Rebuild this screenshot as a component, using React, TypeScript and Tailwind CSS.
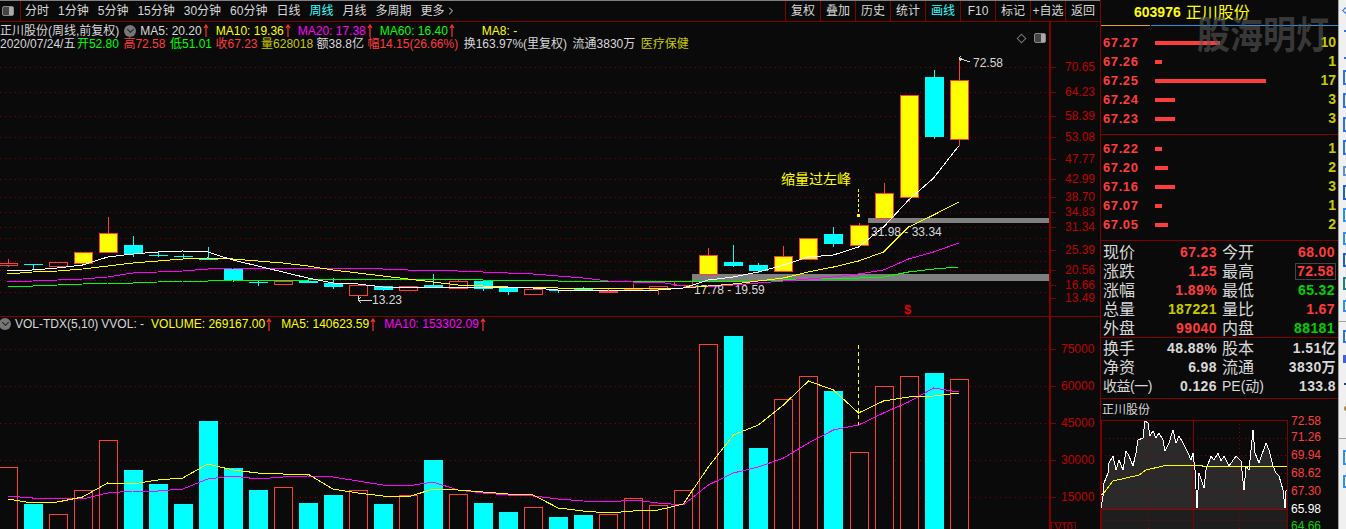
import { ChevronRight } from "lucide-react";

const CN = "font-['Liberation_Sans','Noto_Sans_CJK_SC',sans-serif]";

const TABS = ["分时", "1分钟", "5分钟", "15分钟", "30分钟", "60分钟", "日线", "周线", "月线", "多周期"];
const TOOLS = ["复权", "叠加", "历史", "统计", "画线", "F10", "标记", "+自选", "返回"];

// x of candle i, same spacing in both panels
const cx = (i: number) => 7.5 + 25.03 * i;

// [body top, body bottom, wick top, wick bottom, hollow / yellow / cyan]
type Candle = [number, number, number, number, "h" | "y" | "c"];

const CANDLES: Candle[] = [
  [263, 265, 259, 267, "h"], [264, 264, 264, 269, "c"], [262, 266, 262, 266, "h"], [252, 263, 252, 263, "y"],
  [233, 252, 217, 252, "y"], [245, 254, 236, 257, "c"], [255, 255, 252, 257, "c"], [256, 257, 254, 258, "c"],
  [258, 260, 247, 260, "c"], [269, 280, 269, 282, "c"], [282, 282, 280, 286, "c"], [281, 284, 281, 284, "h"],
  [281, 283, 279, 283, "c"], [283, 287, 278, 289, "c"], [285, 295, 285, 300, "h"], [286, 290, 286, 291, "c"],
  [286, 290, 286, 290, "h"], [285, 288, 274, 288, "c"], [281, 288, 280, 288, "h"], [281, 289, 281, 291, "c"],
  [288, 292, 288, 295, "c"], [289, 294, 289, 294, "h"], [290, 291, 290, 293, "c"], [288, 291, 287, 291, "c"],
  [291, 292, 288, 293, "h"], [289, 289, 284, 290, "h"], [286, 289, 286, 295, "h"], [281, 285, 281, 285, "h"],
  [255, 274, 248, 274, "y"], [262, 266, 245, 267, "c"], [265, 271, 263, 273, "c"], [256, 271, 246, 271, "y"],
  [238, 259, 238, 259, "y"], [234, 244, 227, 247, "c"], [225, 245, 223, 245, "y"], [193, 218, 183, 218, "y"],
  [95, 197, 95, 202, "y"], [77, 137, 70, 139, "c"], [80, 139, 57, 146, "y"],
];

const MA5 = [271, 270, 268, 265, 257, 254, 252, 251, 252, 260, 266, 272, 278, 283, 284, 287, 287, 288, 287, 287, 287, 288, 290, 290, 290, 291, 290, 288, 280, 277, 272, 265, 257, 255, 247, 227, 200, 178, 146];
const MA10 = [274, 272, 271, 269, 266, 263, 261, 259, 258, 259, 261, 263, 266, 270, 273, 276, 279, 282, 285, 286, 287, 287, 288, 288, 288, 288, 288, 288, 286, 284, 281, 278, 272, 267, 261, 252, 227, 215, 202];
const MA20 = [282, 281, 280, 279, 277, 273, 272, 271, 269, 268, 268, 268, 268, 268, 268, 269, 270, 270, 271, 272, 273, 274, 276, 278, 281, 282, 282, 286, 287, 285, 283, 281, 279, 277, 274, 270, 259, 252, 243];
const MA60 = [286, 286, 285, 284, 283, 283, 282, 281, 281, 280, 280, 280, 280, 279, 279, 279, 279, 279, 279, 280, 280, 280, 281, 281, 281, 281, 281, 281, 281, 281, 281, 280, 279, 278, 278, 277, 272, 269, 267];

const VOLS: [number, "h" | "c"][] = [
  [467, "h"], [504, "c"], [514, "h"], [490, "h"], [440, "h"], [470, "c"], [484, "c"], [504, "c"], [421, "c"], [468, "c"],
  [490, "c"], [487, "h"], [503, "c"], [495, "c"], [490, "h"], [504, "c"], [495, "h"], [460, "c"], [494, "h"], [503, "c"],
  [512, "c"], [507, "h"], [517, "c"], [515, "c"], [514, "h"], [498, "h"], [505, "h"], [490, "h"], [344, "h"], [336, "c"],
  [448, "c"], [399, "h"], [376, "h"], [391, "c"], [452, "h"], [386, "h"], [376, "h"], [373, "c"], [379, "h"],
];
const VMA5 = [499, 503, 502, 497, 483, 484, 480, 478, 464, 470, 473, 474, 474, 489, 493, 496, 497, 489, 490, 492, 494, 495, 508, 511, 513, 511, 510, 504, 467, 435, 425, 405, 381, 390, 413, 401, 397, 396, 393];
const VMA10 = [496, 498, 498, 499, 493, 491, 491, 489, 479, 476, 479, 477, 476, 477, 481, 485, 486, 482, 490, 493, 495, 496, 499, 501, 502, 500, 503, 505, 485, 473, 467, 458, 443, 430, 425, 413, 402, 388, 392];

const PRICE_GRID = [67, 92, 116, 137, 158, 179, 197, 212, 227, 238, 251, 261, 270, 280, 292];
const PRICE_AXIS: [string, number][] = [
  ["70.65", 67], ["64.23", 92], ["58.39", 116], ["53.08", 137], ["47.77", 159], ["42.99", 179], ["38.70", 197],
  ["34.83", 212], ["31.34", 227], ["25.39", 250], ["20.56", 270], ["16.66", 285], ["13.49", 298],
];
const VOL_AXIS: [string, number][] = [["75000", 349], ["60000", 386], ["45000", 423], ["30000", 460], ["15000", 497]];

const ASKS: [string, number, number][] = [["67.27", 65, 10], ["67.26", 7, 1], ["67.25", 111, 17], ["67.24", 20, 3], ["67.23", 20, 3]];
const BIDS: [string, number, number][] = [["67.22", 7, 1], ["67.20", 13, 2], ["67.16", 20, 3], ["67.07", 7, 1], ["67.05", 13, 2]];

const RED = "text-[#ff3c3c]";
const GREEN = "text-[#00d000]";
const GOLD = "text-[#c8c800]";

const STATS: [string, string, string, string, string, string][] = [
  ["现价", "67.23", RED, "今开", "68.00", RED],
  ["涨跌", "1.25", RED, "最高", "72.58", RED],
  ["涨幅", "1.89%", RED, "最低", "65.32", GREEN],
  ["总量", "187221", GOLD, "量比", "1.67", RED],
  ["外盘", "99040", RED, "内盘", "88181", GREEN],
];
const STATS2: [string, string, string, string][] = [
  ["换手", "48.88%", "股本", "1.51亿"],
  ["净资", "6.98", "流通", "3830万"],
  ["收益(一)", "0.126", "PE(动)", "133.8"],
];

const TICK_LINE = "0,88 2,76 3,63 7,53 8,43 12,36 15,50 18,40 22,50 25,31 28,36 32,46 35,33 37,20 42,18 44,1 47,3 49,16 52,11 55,18 58,13 62,20 64,31 68,23 72,10 75,23 78,16 82,23 87,33 90,40 92,33 94,50 96,88 98,53 103,68 105,50 110,36 113,40 117,33 120,41 123,36 128,46 135,36 140,41 143,70 145,46 148,50 152,10 154,33 158,43 165,23 168,30 172,46 175,53 178,56 182,70 184,88 185,71 186,70";
const AVG_LINE = "0,75 3,73 12,61 25,58 38,55 45,50 62,46 78,45 95,45 108,47 128,46 155,46 175,46 186,47";

// right edge of the window: the tool strip, cut off by the screenshot
const STRIP: [number, number, string][] = [
  [70, 15, "border-[#3070e0]"], [93, 15, "border-[#3070e0]"], [117, 15, "border-[#3070e0]"], [140, 15, "border-[#3070e0]"],
  [166, 10, "border-[#6090d0]"], [185, 15, "border-[#2060c0]"], [208, 14, "border-[#3090f0]"], [232, 13, "border-[#3090f0]"],
  [253, 14, "border-[#2060c0]"], [277, 13, "border-[#208080]"], [300, 12, "border-[#3090f0]"], [330, 13, "border-[#3070e0]"],
  [450, 15, "border-[#3090f0]"], [475, 13, "border-[#3090f0]"],
];

const pts = (ys: number[]) => ys.map((y, i) => `${cx(i)},${y}`).join(" ");

function UpMark() {
  return (
    <svg width={8} height={13} viewBox="0 0 8 13" className="block shrink-0">
      <path d="M4 1 L4 13 M2 4 L4 1 L6 4" fill="none" stroke="#ff3030" strokeWidth={1.2} />
    </svg>
  );
}

function Collapse() {
  return (
    <span className="flex h-[12px] w-[12px] shrink-0 items-center justify-center rounded-full bg-[#777]">
      <span className="mt-[-3px] h-[5px] w-[5px] rotate-45 border-r border-b border-[#222]" />
    </span>
  );
}

function PanelIcon() {
  return (
    <span className="flex h-[10px] w-[12px] justify-end rounded-[2px] border border-[#888] bg-[#444]">
      <span className="w-[4px] bg-[#aaa]" />
    </span>
  );
}

function Toolbar() {
  return (
    <div className="flex h-[21px] items-center justify-between border-b border-[#800000] text-[12px] leading-none text-[#d8d8d8]">
      <div className="flex h-full items-center">
        <span className="ml-[2px]">
          <PanelIcon />
        </span>
        <span className="ml-[6px] h-full border-l border-[#800000]" />
        <div className="ml-[4px] flex items-center gap-[9px]">
          {TABS.map((t) => (
            <span key={t} className={t === "周线" ? "text-[#38ffff]" : ""}>{t}</span>
          ))}
          <span className="flex items-center">
            更多
            <ChevronRight size={12} />
          </span>
        </div>
      </div>
      <div className="flex h-full">
        {TOOLS.map((t) => (
          <span
            key={t}
            className={`flex w-[35px] items-center justify-center whitespace-nowrap border-l border-[#800000] ${t === "画线" ? "text-[#38ffff]" : ""}`}
          >
            {t}
          </span>
        ))}
      </div>
    </div>
  );
}

function InfoHeader() {
  return (
    <div className="relative h-[28px] pt-[2px] text-[12px] leading-[14px]">
      <div className="flex h-[13px] items-center whitespace-nowrap">
        <span className="text-[#d8d8d8]">正川股份(周线,前复权)</span>
        <span className="ml-[5px]"><Collapse /></span>
        <span className="ml-[4px] text-[#d8d8d8]">MA5: 20.20</span>
        <UpMark />
        <span className="ml-[6px] text-[#ffff00]">MA10: 19.36</span>
        <UpMark />
        <span className="ml-[6px] text-[#ff00ff]">MA20: 17.38</span>
        <UpMark />
        <span className="ml-[6px] text-[#00ff00]">MA60: 16.40</span>
        <UpMark />
        <span className="ml-[26px] text-[#ffff00]">MA8: -</span>
      </div>
      <div className="flex gap-[3.5px] whitespace-nowrap">
        <span className="-mr-[2px] text-[#d8d8d8]">2020/07/24/五</span>
        <span className="text-[#00ff00]">开52.80</span>
        <span className="ml-[1px] text-[#ff3c3c]">高72.58</span>
        <span className="ml-[1px] text-[#00ff00]">低51.01</span>
        <span className="text-[#ff3c3c]">收67.23</span>
        <span className="text-[#c8c800]">量628018</span>
        <span className="text-[#d8d8d8]">额38.8亿</span>
        <span className="text-[#ff3c3c]">幅14.15(26.66%)</span>
        <span className="ml-[2px] text-[#d8d8d8]">换163.97%(里复权)</span>
        <span className="ml-[2px] text-[#d8d8d8]">流通3830万</span>
        <span className="ml-[2px] text-[#c8c800]">医疗保健</span>
      </div>
      <span className="absolute left-[1018px] top-[13px] h-[7px] w-[7px] rotate-45 border border-[#777]" />
      <span className="absolute left-[1034px] top-[11px]">
        <PanelIcon />
      </span>
    </div>
  );
}

function PriceChart() {
  return (
    <div className="relative h-[267px] border-b border-[#800000]">
      <svg width={1049} height={266} viewBox="0 50 1049 266" className="block" shapeRendering="crispEdges">
        {PRICE_GRID.map((y) => (
          <line key={y} x1={0} x2={1049} y1={y + 0.5} y2={y + 0.5} stroke="#8a0000" strokeDasharray="1 4" />
        ))}
        <rect x={868} y={218} width={181} height={5} fill="#808080" />
        <rect x={692} y={274} width={357} height={7} fill="#808080" />
        {CANDLES.map(([top, bot, hi, lo, c], i) => {
          const x = Math.round(cx(i));
          const wick = c === "c" ? "#00ffff" : "#ff3c3c";
          return (
            <g key={i}>
              <line x1={x + 0.5} x2={x + 0.5} y1={hi} y2={lo} stroke={wick} />
              {c === "c" ? (
                <rect x={x - 9} y={top} width={19} height={Math.max(bot - top, 1)} fill="#00ffff" />
              ) : (
                <rect
                  x={x - 8.5}
                  y={top + 0.5}
                  width={18}
                  height={Math.max(bot - top, 1)}
                  fill={c === "y" ? "#ffff00" : "#0a0a0a"}
                  stroke="#ff3c3c"
                />
              )}
            </g>
          );
        })}
        <g fill="none" strokeWidth={1}>
          <polyline points={pts(MA60)} stroke="#00ff00" />
          <polyline points={pts(MA20)} stroke="#ff00ff" />
          <polyline points={pts(MA10)} stroke="#ffff00" />
          <polyline points={pts(MA5)} stroke="#ffffff" />
        </g>
        <line x1={858.5} x2={858.5} y1={189} y2={212} stroke="#ffff00" strokeDasharray="3 2" />
        <rect x={857} y={214} width={3} height={3} fill="#ffff00" />
        <path d="M959 58 L964 60 L970 62 M959 58 L961 56 M959 58 L961 61" stroke="#d8d8d8" fill="none" />
        <path d="M358 296 L358 300 L372 300 M358 300 L361 297 M358 300 L361 303" stroke="#d8d8d8" fill="none" />
      </svg>

      {/* chart annotations sit on the canvas */}
      <span className="absolute left-[781px] top-[121px] text-[14px] leading-4 text-[#ffff00]">缩量过左峰</span>
      <span className="absolute left-[871px] top-[174px] text-[12px] leading-4 text-[#d8d8d8]">31.98 - 33.34</span>
      <span className="absolute left-[694px] top-[232px] text-[12px] leading-4 text-[#d8d8d8]">17.78 - 19.59</span>
      <span className="absolute left-[973px] top-[5px] text-[12px] leading-4 text-[#d8d8d8]">72.58</span>
      <span className="absolute left-[372px] top-[242px] text-[12px] leading-4 text-[#d8d8d8]">13.23</span>
      <span className="absolute left-[904px] top-[252px] text-[13px] font-bold leading-4 text-[#e00000]">$</span>
    </div>
  );
}

function VolumeChart() {
  return (
    <div className="relative h-[212px]">
      <div className="flex h-[14px] items-center whitespace-nowrap text-[12px] leading-none">
        <span className="-ml-[1px]"><Collapse /></span>
        <span className="ml-[4px] text-[#d8d8d8]">VOL-TDX(5,10)</span>
        <span className="ml-[3px] text-[#d8d8d8]">VVOL: -</span>
        <span className="ml-[7px] text-[#ffff00]">VOLUME: 269167.00</span>
        <UpMark />
        <span className="ml-[8px] text-[#ffff00]">MA5: 140623.59</span>
        <UpMark />
        <span className="ml-[7px] text-[#ff00ff]">MA10: 153302.09</span>
        <UpMark />
      </div>
      <svg width={1049} height={198} viewBox="0 331 1049 198" className="block" shapeRendering="crispEdges">
        {VOL_AXIS.map(([, y]) => (
          <line key={y} x1={0} x2={1049} y1={y + 0.5} y2={y + 0.5} stroke="#8a0000" strokeDasharray="1 4" />
        ))}
        {VOLS.map(([top, c], i) => {
          const x = Math.round(cx(i));
          return c === "c" ? (
            <rect key={i} x={x - 9} y={top} width={19} height={529 - top} fill="#00ffff" />
          ) : (
            <rect key={i} x={x - 8.5} y={top + 0.5} width={18} height={540 - top} fill="#0a0a0a" stroke="#ff3c3c" />
          );
        })}
        <g fill="none">
          <polyline points={pts(VMA10)} stroke="#ff00ff" />
          <polyline points={pts(VMA5)} stroke="#ffff00" />
        </g>
        <line x1={858.5} x2={858.5} y1={345} y2={425} stroke="#ffff00" strokeDasharray="4 3" />
      </svg>
    </div>
  );
}

function Axis() {
  return (
    <div className="relative w-[51px] border-l-2 border-[#800000] text-[12px] leading-none text-[#c00000]">
      {PRICE_AXIS.map(([v, y]) => (
        <div key={v}>
          <span className="absolute left-0 w-[5px] border-t border-[#800000]" style={{ top: y - 22 }} />
          <span className="absolute left-[14px]" style={{ top: y - 28 }}>{v}</span>
        </div>
      ))}
      {VOL_AXIS.map(([v, y]) => (
        <div key={v}>
          <span className="absolute left-0 w-[5px] border-t border-[#800000]" style={{ top: y - 22 }} />
          <span className="absolute left-[10px]" style={{ top: y - 28 }}>{v}</span>
        </div>
      ))}
      <div className="absolute left-[-2px] right-0 top-[294px] border-t border-[#800000]" />
      <span className="absolute left-0 top-[500px] h-[7px] w-[25px] overflow-hidden border border-b-0 border-[#800000] text-center text-[10px] leading-[10px]">V10</span>
    </div>
  );
}

function BookRow({ price, bar, vol }: { price: string; bar: number; vol: number }) {
  return (
    <div className="flex h-[19px] items-center">
      <span className={`w-[54px] pl-[2px] text-[13px] font-bold tracking-[0.6px] ${RED}`}>{price}</span>
      <span className="h-[4px] bg-[#ff3c3c]" style={{ width: bar }} />
      <span className={`ml-auto text-[14px] font-bold ${GOLD}`}>{vol}</span>
    </div>
  );
}

function TickChart() {
  const labels: [string, number, string][] = [
    ["72.58", 1, RED], ["71.26", 17, RED], ["69.94", 35, RED], ["68.62", 53, RED],
    ["67.30", 71, RED], ["65.98", 89, "text-white"], ["64.66", 106, GREEN],
  ];
  return (
    <div className="relative h-[109px]">
      <svg width={187} height={109} className="block" shapeRendering="crispEdges">
        <polygon points={`0,89 ${TICK_LINE} 186,89`} fill="#2a2a2a" />
        <rect x={0} y={90} width={187} height={19} fill="#1e1e1e" />
        {[18, 35, 53, 71, 100].map((y) => (
          <line key={y} x1={0} x2={187} y1={y + 0.5} y2={y + 0.5} stroke="#8a0000" strokeDasharray="1 3" />
        ))}
        <line x1={47.5} x2={47.5} y1={0} y2={109} stroke="#8a0000" strokeDasharray="1 3" />
        <line x1={138.5} x2={138.5} y1={0} y2={109} stroke="#8a0000" strokeDasharray="1 3" />
        <rect x={0.5} y={0.5} width={186} height={120} fill="none" stroke="#800000" />
        <line x1={92.5} x2={92.5} y1={0} y2={109} stroke="#800000" />
        <line x1={0} x2={187} y1={89.5} y2={89.5} stroke="#a00000" />
        <polyline points={TICK_LINE} fill="none" stroke="#ffffff" />
        <polyline points={AVG_LINE} fill="none" stroke="#ffff00" />
      </svg>
      {labels.map(([v, y, c]) => (
        <span key={v} className={`absolute left-[190px] text-[12px] leading-none ${c}`} style={{ top: y - 6 }}>{v}</span>
      ))}
    </div>
  );
}

function QuotePanel() {
  return (
    <div className="relative flex w-[238px] shrink-0 flex-col border-l border-[#800000]">
      <div className="flex h-[25px] items-center pl-[33px] text-[#ffff00]">
        <span className="mr-[5px] text-[14px] font-bold">603976</span>
        <span className="text-[16px]">正川股份</span>
      </div>
      <div className="flex h-[1px]">
        <span className="w-[49px] bg-[#e0a030]" />
        <span className="ml-[1px] flex-1 bg-[#3090e0]" />
      </div>
      <div className="h-[109px] border-b border-[#800000] pr-[2px] pt-[7px]">
        {ASKS.map(([p, b, v]) => <BookRow key={p} price={p} bar={b} vol={v} />)}
      </div>
      <div className="h-[106px] border-b border-[#800000] pr-[2px] pt-[4px]">
        {BIDS.map(([p, b, v]) => <BookRow key={p} price={p} bar={b} vol={v} />)}
      </div>
      <div className="h-[97px] border-b border-[#800000] pt-[2px]">
        {STATS.map(([a, av, ac, b, bv, bc]) => (
          <div key={a} className="flex h-[19px] items-center px-[2px] text-[14px]">
            <span className="w-[36px] text-[16px] text-[#d8d8d8]">{a}</span>
            <span className={`w-[78px] text-right font-bold tracking-[0.4px] ${ac}`}>{av}</span>
            <span className="ml-[5px] w-[36px] text-[16px] text-[#d8d8d8]">{b}</span>
            <span className={`ml-auto px-[1px] text-right font-bold tracking-[0.4px] ${bc} ${b === "最高" ? "border border-[#444] leading-[15px]" : ""}`}>{bv}</span>
          </div>
        ))}
      </div>
      <div className="h-[61px] border-b border-[#800000] pt-[1px]">
        {STATS2.map(([a, av, b, bv]) => (
          <div key={a} className="flex h-[19px] items-center px-[2px] text-[14px] text-[#d8d8d8]">
            <span className={`w-[50px] whitespace-nowrap ${a === "净资" || a === "换手" ? "text-[16px]" : "tracking-[-0.5px]"}`}>{a}</span>
            <span className="w-[64px] text-right font-bold tracking-[0.4px]">{av}</span>
            <span className={`ml-[5px] w-[45px] whitespace-nowrap ${b === "PE(动)" ? "" : "text-[16px]"}`}>{b}</span>
            <span className="ml-auto text-right font-bold tracking-[0.4px]">{bv}</span>
          </div>
        ))}
      </div>
      <div className="flex h-[21px] items-center pl-[1px] text-[12px] text-[#d8d8d8]">正川股份</div>
      <TickChart />
      {/* watermark over the order book */}
      <span className="pointer-events-none absolute left-[96px] top-[15px] origin-top scale-y-[1.15] whitespace-nowrap text-[33px] font-bold leading-9 text-[#585858]/60">
        股海明灯
      </span>
    </div>
  );
}

function ToolStrip() {
  return (
    <div className="relative w-[8px] shrink-0 border-l border-[#a0a0a0] bg-[#f0f0f0]">
      <span className="absolute left-[4px] top-[8px] h-[5px] w-[5px] rotate-45 border border-[#3070e0]" />
      <span className="absolute left-[5px] top-[30px] h-[2px] w-[3px] bg-[#3070e0]" />
      <span className="absolute left-[5px] top-[57px] h-[2px] w-[3px] bg-[#3070e0]" />
      {STRIP.map(([y, h, c]) => (
        <span key={y} className={`absolute left-[4px] w-[6px] border-2 bg-white ${c}`} style={{ top: y, height: h }} />
      ))}
      <div className="absolute left-0 right-0 top-[321px] border-t border-[#a0a0a0]" />
      <span className="absolute left-[4px] top-[355px] h-[8px] w-[4px] bg-[#4060e0]" />
      <span className="absolute left-[5px] top-[383px] h-[2px] w-[3px] bg-[#204080]" />
      <span className="absolute left-[5px] top-[406px] h-[5px] w-[3px] rounded-l-full bg-[#a08040]" />
      <div className="absolute left-0 right-0 top-[438px] border-t border-[#a0a0a0]" />
    </div>
  );
}

export default function App() {
  return (
    <div className={`flex h-[529px] w-[1346px] overflow-hidden bg-[#0a0a0a] ${CN}`}>
      <div className="flex w-[1100px] shrink-0 flex-col border-t border-[#808080]">
        <Toolbar />
        <div className="flex flex-1">
          <div className="flex w-[1049px] flex-col">
            <InfoHeader />
            <PriceChart />
            <VolumeChart />
          </div>
          <Axis />
        </div>
      </div>
      <QuotePanel />
      <ToolStrip />
    </div>
  );
}
